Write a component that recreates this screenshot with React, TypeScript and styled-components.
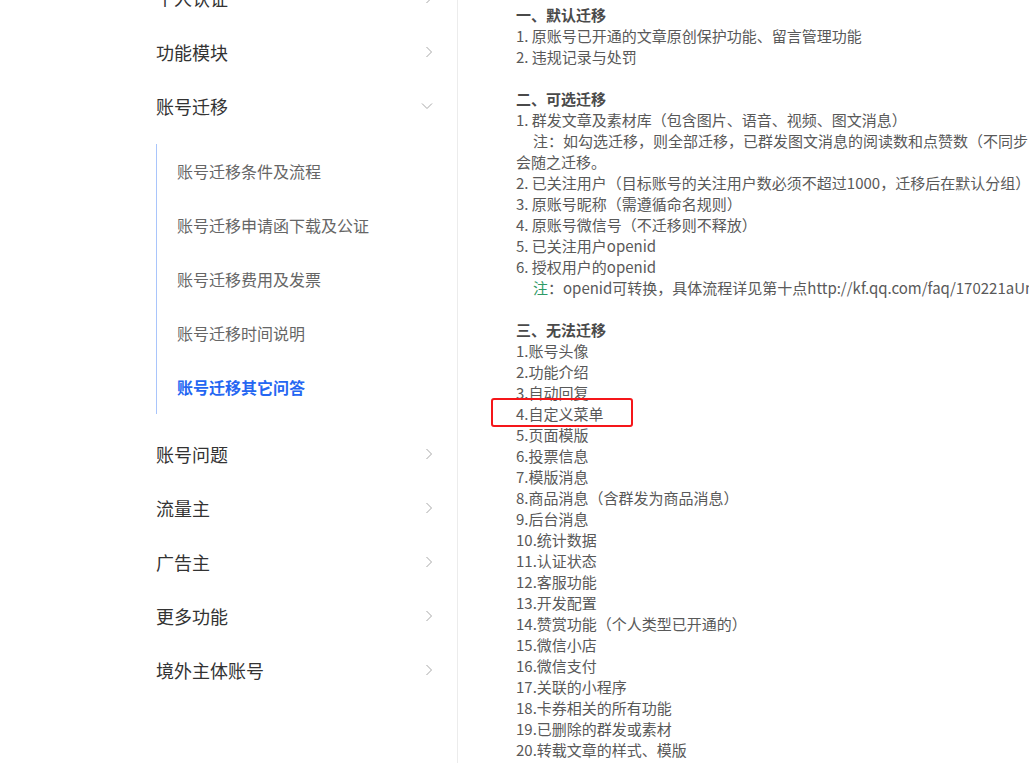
import React from "react";
import styled, { createGlobalStyle } from "styled-components";

const Global = createGlobalStyle`
  html, body { margin: 0; padding: 0; background: #fff; }
  body { font-family: "Noto Sans CJK SC", "Noto Sans", sans-serif; overflow: hidden; }
`;

const Page = styled.div`
  display: flex;
  width: 1029px;
  height: 763px;
  overflow: hidden;
`;

const Sidebar = styled.nav`
  width: 301px;
  padding-left: 156px;
  border-right: 1px solid #ececec;
  flex-shrink: 0;
`;

const MenuList = styled.div`
  margin-top: -29px;
  padding-right: 24px;
`;

const MenuRow = styled.div`
  height: 54px;
  display: flex;
  align-items: center;
  justify-content: space-between;
  font-size: 18px;
  color: #333;
`;

const SubMenu = styled.div`
  margin: 11px 0 13px;
  border-left: 1px solid #a9c5fb;
`;

const SubRow = styled.div<{ $active?: boolean }>`
  height: 54px;
  display: flex;
  align-items: center;
  padding-left: 20px;
  font-size: 16px;
  color: ${(p) => (p.$active ? "#2466f2" : "#666")};
  font-weight: ${(p) => (p.$active ? 600 : 400)};
`;

const Content = styled.main`
  flex: 1;
  padding: 4px 0 0 58px;
  overflow: hidden;
  font-size: 15px;
  line-height: 21px;
  color: #595959;
  white-space: nowrap;
`;

const Line = styled.div<{ $indent?: boolean; $bold?: boolean }>`
  position: relative;
  height: 21px;
  padding-left: ${(p) => (p.$indent ? "17px" : "0")};
  font-weight: ${(p) => (p.$bold ? 700 : 400)};
  color: ${(p) => (p.$bold ? "#4a4a4a" : "#595959")};
`;

const Green = styled.span`
  color: #2e9a66;
`;

const RedBox = styled.span`
  position: absolute;
  left: -25px;
  top: -5px;
  width: 138px;
  height: 25px;
  border: 2px solid #f5161a;
  border-radius: 3px;
`;

const Chevron = ({ down }: { down?: boolean }) =>
  down ? (
    <svg width="12" height="8" viewBox="0 0 12 8">
      <polyline points="1,1.5 6,6.5 11,1.5" fill="none" stroke="#a8a8a8" strokeWidth="1" />
    </svg>
  ) : (
    <svg width="8" height="12" viewBox="0 0 8 12">
      <polyline points="1.5,1 6.5,6 1.5,11" fill="none" stroke="#a8a8a8" strokeWidth="1" />
    </svg>
  );

const topMenu = ["个人认证", "功能模块"];
const subMenu = [
  "账号迁移条件及流程",
  "账号迁移申请函下载及公证",
  "账号迁移费用及发票",
  "账号迁移时间说明",
  "账号迁移其它问答",
];
const bottomMenu = ["账号问题", "流量主", "广告主", "更多功能", "境外主体账号"];

const cannot = [
  "1.账号头像",
  "2.功能介绍",
  "3.自动回复",
  "4.自定义菜单",
  "5.页面模版",
  "6.投票信息",
  "7.模版消息",
  "8.商品消息（含群发为商品消息）",
  "9.后台消息",
  "10.统计数据",
  "11.认证状态",
  "12.客服功能",
  "13.开发配置",
  "14.赞赏功能（个人类型已开通的）",
  "15.微信小店",
  "16.微信支付",
  "17.关联的小程序",
  "18.卡券相关的所有功能",
  "19.已删除的群发或素材",
  "20.转载文章的样式、模版",
];

export default function App() {
  return (
    <Page>
      <Global />
      <Sidebar>
        <MenuList>
          {topMenu.map((t) => (
            <MenuRow key={t}>
              <span>{t}</span>
              <Chevron />
            </MenuRow>
          ))}
          <MenuRow>
            <span>账号迁移</span>
            <Chevron down />
          </MenuRow>
          <SubMenu>
            {subMenu.map((t, i) => (
              <SubRow key={t} $active={i === subMenu.length - 1}>
                {t}
              </SubRow>
            ))}
          </SubMenu>
          {bottomMenu.map((t) => (
            <MenuRow key={t}>
              <span>{t}</span>
              <Chevron />
            </MenuRow>
          ))}
        </MenuList>
      </Sidebar>
      <Content>
        <Line $bold>一、默认迁移</Line>
        <Line>1. 原账号已开通的文章原创保护功能、留言管理功能</Line>
        <Line>2. 违规记录与处罚</Line>
        <Line />
        <Line $bold>二、可选迁移</Line>
        <Line>1. 群发文章及素材库（包含图片、语音、视频、图文消息）</Line>
        <Line $indent>注：如勾选迁移，则全部迁移，已群发图文消息的阅读数和点赞数（不同步</Line>
        <Line>会随之迁移。</Line>
        <Line>2. 已关注用户（目标账号的关注用户数必须不超过1000，迁移后在默认分组）</Line>
        <Line>3. 原账号昵称（需遵循命名规则）</Line>
        <Line>4. 原账号微信号（不迁移则不释放）</Line>
        <Line>5. 已关注用户openid</Line>
        <Line>6. 授权用户的openid</Line>
        <Line $indent>
          <Green>注</Green>：openid可转换，具体流程详见第十点http://kf.qq.com/faq/170221aUnmmU170221eUZJNf.html
        </Line>
        <Line />
        <Line $bold>三、无法迁移</Line>
        {cannot.map((t) => (
          <Line key={t}>
            {t.startsWith("4.") && <RedBox />}
            {t}
          </Line>
        ))}
      </Content>
    </Page>
  );
}
